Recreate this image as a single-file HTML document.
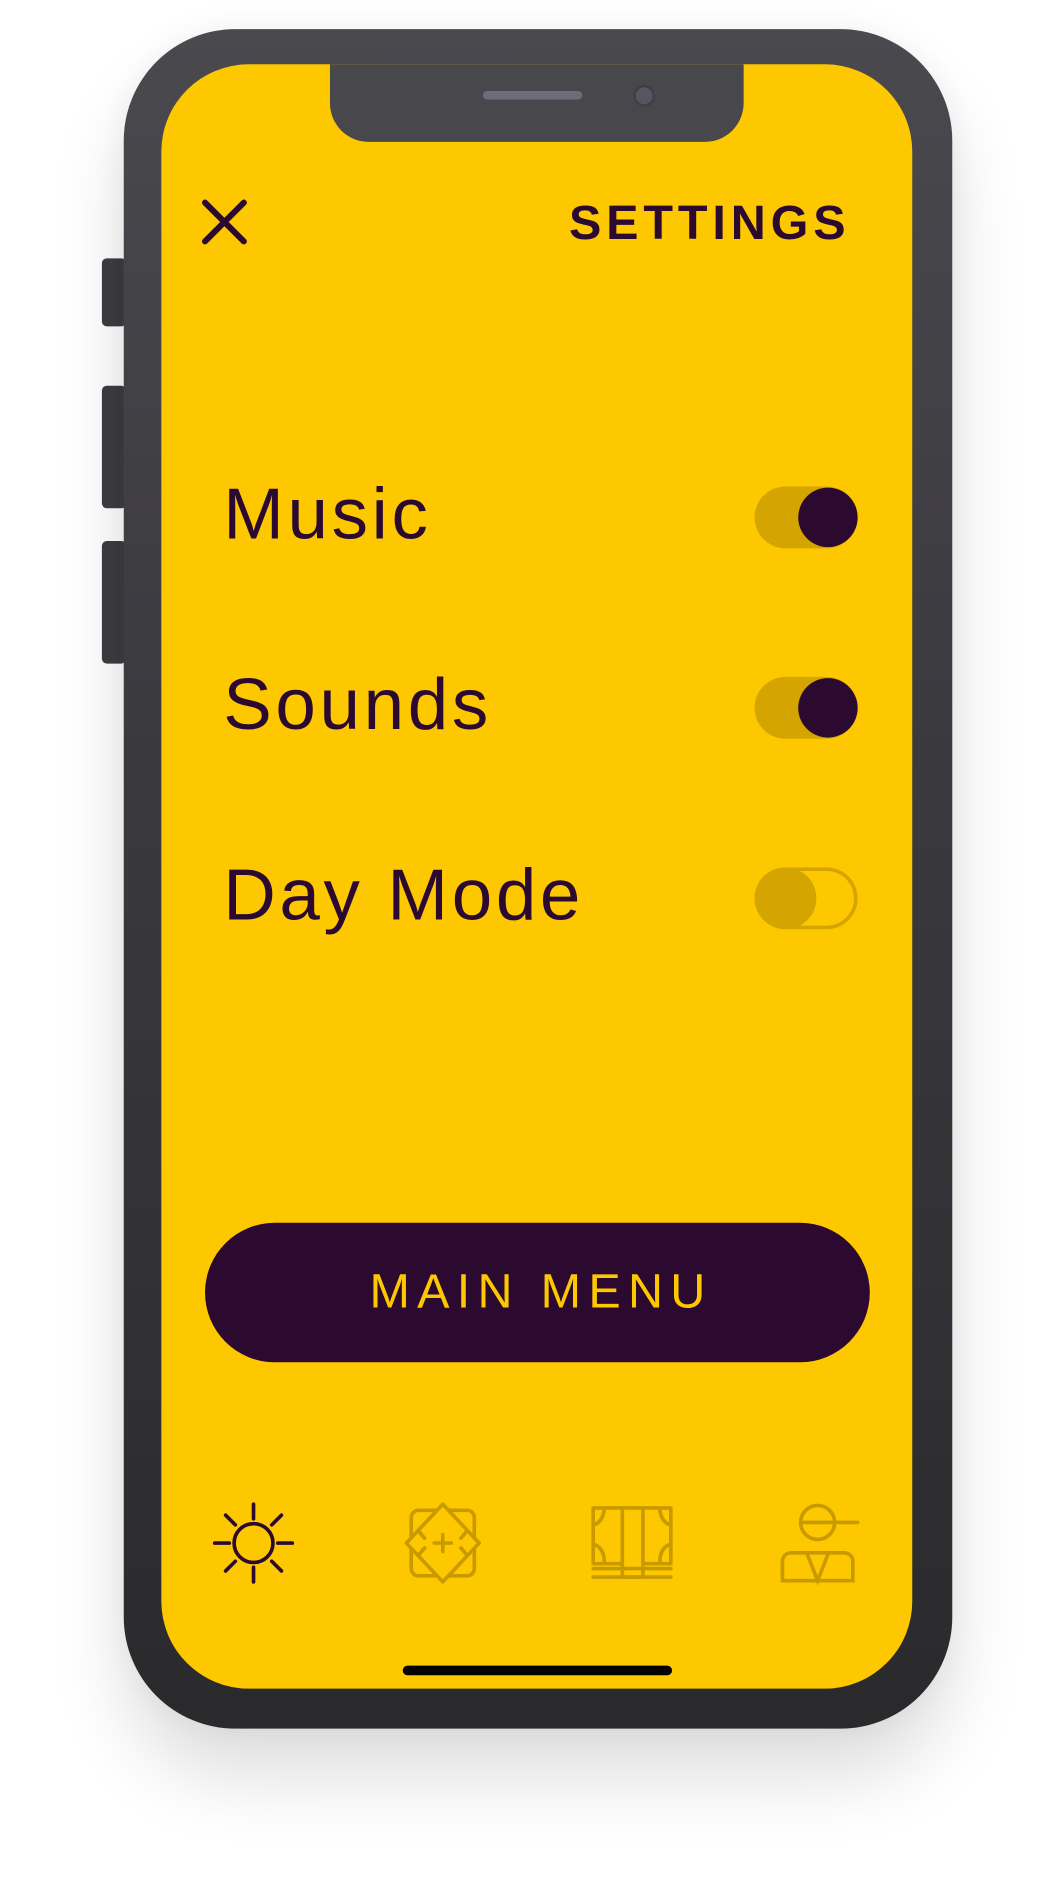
<!DOCTYPE html>
<html><head><meta charset="utf-8"><style>
html,body{margin:0;padding:0;background:#fff;}
body{width:1053px;height:1903px;overflow:hidden;position:relative;font-family:"Liberation Sans",sans-serif;}
#w{position:absolute;left:0;top:0;width:868px;height:1568px;transform:scale(1.2131);transform-origin:0 0;}
.a{position:absolute;}
.phone{left:102px;top:24px;width:683px;height:1401px;border-radius:92px;background:linear-gradient(#4a494e,#3b3a3f 40%,#2a2a2c);box-shadow:0 40px 60px rgba(0,0,0,0.13),0 0 30px rgba(0,0,0,0.06);}
.btn{left:84px;width:20px;border-radius:4px;background:#3e3d42;}
.screen{left:133px;top:53px;width:619px;height:1339px;border-radius:72px;background:#fec800;overflow:hidden;}
.notch{left:272px;top:53px;width:341px;height:64px;background:#48474c;border-radius:0 0 32px 32px;}
.lbl{left:184px;font-size:60px;color:#2c0a30;letter-spacing:3px;line-height:1;}
.tr{left:622px;width:85px;height:51px;border-radius:26px;background:#d4a500;}
.kn{left:658px;width:49px;height:49px;border-radius:50%;background:#2c0a30;}
</style></head><body><div id="w">
<div class="a btn" style="top:213px;height:56px"></div>
<div class="a btn" style="top:318px;height:101px"></div>
<div class="a btn" style="top:446px;height:101px"></div>
<div class="a phone"></div>
<div class="a screen"></div>
<div class="a notch"></div>
<div class="a" style="left:398px;top:75px;width:82px;height:7px;border-radius:4px;background:#6c6d78"></div>
<div class="a" style="left:522px;top:70px;width:18px;height:18px;border-radius:50%;background:#55565f;box-shadow:inset 0 0 0 2px #3e3f46"></div>
<svg class="a" style="left:166px;top:164px" width="38" height="38"><path d="M3 3L35 35M35 3L3 35" stroke="#2c0a30" stroke-width="5" stroke-linecap="round"/></svg>
<div class="a" style="left:469px;top:164px;font-size:40px;font-weight:bold;letter-spacing:4px;color:#2c0a30;line-height:1">SETTINGS</div>
<div class="a lbl" style="top:394px">Music</div>
<div class="a lbl" style="top:551px">Sounds</div>
<div class="a lbl" style="top:708px">Day Mode</div>
<div class="a tr" style="top:401px"></div><div class="a kn" style="top:402px"></div>
<div class="a tr" style="top:558px"></div><div class="a kn" style="top:559px"></div>
<div class="a tr" style="top:715px;background:none;box-shadow:inset 0 0 0 3px #d4a500"></div>
<div class="a" style="left:622px;top:715px;width:51px;height:51px;border-radius:50%;background:#d4a500"></div>
<div class="a" style="left:169px;top:1008px;width:548px;height:115px;border-radius:58px;background:#2c0a30;color:#fec800;font-size:40px;letter-spacing:6px;text-align:center;line-height:115px;text-indent:6px">MAIN MENU</div>
<svg class="a" style="left:0;top:0" width="868" height="1568">
<g stroke="#2c0a30" stroke-width="3" fill="none" stroke-linecap="round">
<circle cx="209" cy="1272" r="16"/>
<path d="M209 1240v12M209 1292v12M177 1272h12M229 1272h12M186 1249l8 8M224 1287l8 8M232 1249l-8 8M194 1287l-8 8"/>
</g>
<g stroke="#c99a00" stroke-width="3" fill="none" stroke-linecap="round">
<rect x="339" y="1245" width="52" height="54" rx="6"/>
<path d="M365 1240L395 1272L365 1304L335 1272Z" stroke-linejoin="round" fill="#fec800"/>
<path d="M365 1265v14M358 1272h14M345 1262l5 6M385 1262l-5 6M345 1282l5-6M385 1282l-5-6"/>
</g>
<g stroke="#c99a00" stroke-width="3" fill="none" stroke-linecap="round">
<path d="M489 1243h64M489 1243v46M553 1243v46M489 1289h24M530 1289h23M513 1243v57h17v-57"/>
<path d="M498 1243a10 14 0 0 1 -9 14M544 1243a10 14 0 0 0 9 14M489 1273a10 14 0 0 1 9 16M553 1273a10 14 0 0 0 -9 16"/>
<path d="M489 1293h64M489 1300h64"/>
</g>
<g stroke="#c99a00" stroke-width="3" fill="none" stroke-linecap="round">
<circle cx="674" cy="1255" r="14"/>
<path d="M660 1255h47"/>
<path d="M645 1303v-16a7 7 0 0 1 7-7h44a7 7 0 0 1 7 7v16z"/>
<path d="M665 1280l9 23l9-23"/>
</g>
<rect x="332" y="1373" width="222" height="8" rx="4" fill="#000"/>
</svg>
</div></body></html>
